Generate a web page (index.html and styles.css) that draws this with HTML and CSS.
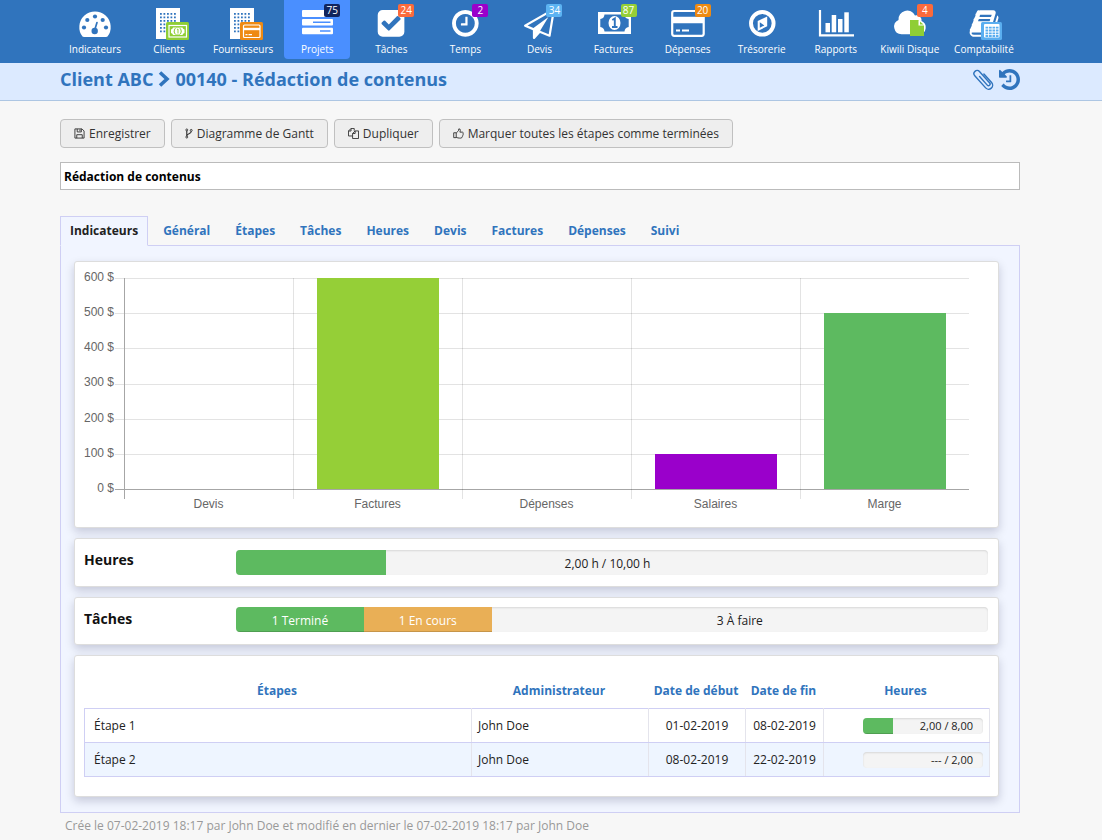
FILE: index.html
```html
<!DOCTYPE html>
<html lang="fr">
<head>
<meta charset="utf-8">
<title>Rédaction de contenus</title>
<link rel="stylesheet" href="styles.css">
</head>
<body>
<svg class="defs" aria-hidden="true">
  <defs>
    <pattern id="windows" x="11" y="8" width="3.5" height="3.5" patternUnits="userSpaceOnUse"><rect width="1.8" height="1.8" fill="#3074bd"/></pattern>
    <g id="building"><rect x="7" y="3" width="24" height="31" fill="#fff"/><rect x="11" y="8" width="16" height="20" fill="url(#windows)"/></g>
  </defs>
</svg>
<nav class="nav">
  <a class="nav-item" href="#"><svg class="nav-icon" viewBox="0 0 40 34"><path fill="#fff" d="M7.5 31.6A15.7 15.7 0 1 1 32.500 31.600Q32 32 31 32H9Q8 32 7.500 31.600Z"/><g fill="#3074bd"><circle cx="9" cy="22.500" r="2.100"/><circle cx="12.300" cy="15" r="2.100"/><circle cx="20" cy="11.500" r="2.100"/><circle cx="27.700" cy="15" r="2.100"/><circle cx="31" cy="22.500" r="2.100"/><circle cx="19.700" cy="26" r="3.200"/></g><path d="M19.700 25L22 17.500" stroke="#3074bd" stroke-width="1.700" stroke-linecap="round"/></svg><span>Indicateurs</span></a>
  <a class="nav-item" href="#"><svg class="nav-icon" viewBox="0 0 40 34"><use href="#building"/><rect x="17" y="17" width="23" height="18" rx="1.500" fill="#8fce35"/><rect x="20" y="20.500" width="17.500" height="11.500" fill="#8fce35" stroke="#fff" stroke-width="1.200"/><path fill="#fff" d="M24 22.500H33.500Q33.700 24 35.500 24.500V28Q33.700 28.500 33.500 30H24Q23.800 28.500 22 28V24.500Q23.800 24 24 22.500Z"/><ellipse cx="28.700" cy="26.200" rx="4" ry="3.800" fill="#8fce35"/><ellipse cx="28.700" cy="26.200" rx="2.900" ry="3.400" fill="#fff"/><path d="M28 24.500L29 24V28.500" fill="none" stroke="#8fce35"/></svg><span>Clients</span></a>
  <a class="nav-item" href="#"><svg class="nav-icon" viewBox="0 0 40 34"><use href="#building"/><rect x="17" y="17" width="23" height="18" rx="1.500" fill="#ee8a12"/><rect x="20.500" y="20" width="16.500" height="12.500" rx="1" fill="none" stroke="#fff" stroke-width="1.200"/><path d="M20.500 24H37" stroke="#fff" stroke-width="2.400"/><path d="M22.500 29.700H24.500M25.500 29.700H29" stroke="#fff" stroke-width="1.200"/></svg><span>Fournisseurs</span></a>
  <a class="nav-item active" href="#"><svg class="nav-icon" viewBox="0 0 40 34"><g fill="#fff"><rect x="5" y="5" width="31" height="7" rx="1"/><rect x="5" y="14" width="31" height="6.500" rx="1"/><rect x="5" y="22.700" width="31" height="6.500" rx="1"/></g><path d="M16 17.300H33.500M23 26H33.500" stroke="#4a8fff" stroke-width="1.600"/></svg><span>Projets</span><b class="badge navy">75</b></a>
  <a class="nav-item" href="#"><svg class="nav-icon" viewBox="0 0 40 34"><path transform="translate(4.500 2.800) scale(.01735)" fill="#fff" d="M813 1299l614-614q19-19 19-45t-19-45l-102-102q-19-19-45-19t-45 19l-467 467-211-211q-19-19-45-19t-45 19l-102 102q-19 19-19 45t19 45l358 358q19 19 45 19t45-19zm851-883v960q0 119-84.500 203.500t-203.500 84.500h-960q-119 0-203.500-84.500t-84.500-203.500v-960q0-119 84.500-203.500t203.500-84.500h960q119 0 203.500 84.500t84.500 203.500z"/></svg><span>Tâches</span><b class="badge red">24</b></a>
  <a class="nav-item" href="#"><svg class="nav-icon" viewBox="0 0 40 34"><path transform="translate(4.800 2.800) scale(.01735)" fill="#fff" d="M1024 544v448q0 14-9 23t-23 9h-320q-14 0-23-9t-9-23v-64q0-14 9-23t23-9h224v-352q0-14 9-23t23-9h64q14 0 23 9t9 23zm416 352q0-148-73-273t-198-198-273-73-273 73-198 198-73 273 73 273 198 198 273 73 273-73 198-198 73-273zm224 0q0 209-103 385.500t-279.500 279.500-385.500 103-385.500-103-279.500-279.500-103-385.500 103-385.500 279.500-279.500 385.500-103 385.500 103 279.500 279.500 103 385.500z"/></svg><span>Temps</span><b class="badge purple">2</b></a>
  <a class="nav-item" href="#"><svg class="nav-icon" viewBox="0 0 40 34"><path transform="translate(5 3) scale(.01735)" fill="#fff" d="M1764 11q33 24 27 64l-256 1536q-5 29-32 45-14 8-31 8-11 0-24-5l-527-215-298 327q-18 21-47 21-14 0-23-4-19-7-30-23.500t-11-36.500v-452l-472-193q-37-14-40-55-3-39 32-59l1664-960q35-21 68 2zm-342 1499l221-1323-1434 827 336 137 863-639-478 797z"/></svg><span>Devis</span><b class="badge sky">34</b></a>
  <a class="nav-item" href="#"><svg class="nav-icon" viewBox="0 0 40 34"><path fill="#fff" fill-rule="evenodd" d="M4 7H37V29H4ZM10.500 9.500Q10.200 13.500 6.300 14V22Q10.200 22.500 10.500 26.500H30.500Q30.800 22.500 34.700 22V14Q30.800 13.500 30.500 9.500Z"/><ellipse cx="20.500" cy="18" rx="6" ry="7" fill="#fff"/><path d="M18.300 15L20.800 13.500V22M18 22H23.500" fill="none" stroke="#3074bd" stroke-width="1.900"/></svg><span>Factures</span><b class="badge lime">87</b></a>
  <a class="nav-item" href="#"><svg class="nav-icon" viewBox="0 0 40 34"><rect x="4.200" y="6" width="31.500" height="24.800" rx="2" fill="none" stroke="#fff" stroke-width="2.200"/><path d="M4 15H36" stroke="#fff" stroke-width="6.500"/><path d="M8 25.500H12M14 25.500H21" stroke="#fff" stroke-width="2"/></svg><span>Dépenses</span><b class="badge orange">20</b></a>
  <a class="nav-item" href="#"><svg class="nav-icon" viewBox="0 0 40 34"><circle cx="20.300" cy="18.300" r="11.300" fill="none" stroke="#fff" stroke-width="3.900"/><path fill="#fff" fill-rule="evenodd" d="M25.200 11.500V21.300L15.700 26V15.900ZM17.800 17.300V22.800L22.300 20.400Z"/></svg><span>Trésorerie</span></a>
  <a class="nav-item" href="#"><svg class="nav-icon" viewBox="0 0 40 34"><path d="M4 5V30.300H38" fill="none" stroke="#fff" stroke-width="2.200"/><g fill="#fff"><rect x="9.500" y="18" width="4.500" height="9.300"/><rect x="15.700" y="10" width="4.500" height="17.300"/><rect x="22" y="14" width="4.500" height="13.300"/><rect x="28.300" y="7.300" width="4.500" height="20"/></g></svg><span>Rapports</span></a>
  <a class="nav-item" href="#"><svg class="nav-icon" viewBox="0 0 40 34"><path fill="#fff" d="M11.500 29.300A7.500 7.500 0 0 1 8.500 15A8.700 8.700 0 0 1 25 10.500A5 5 0 0 1 31.500 16A7 7 0 0 1 30 29.300Z"/><path fill="#8fce35" d="M20 15H29V20H34V31H20Z"/><path fill="#fff" d="M28.500 15L34.500 20.500H28.500Z"/><path fill="#8fce35" d="M30 16.500V19.500H33.500Z"/></svg><span>Kiwili Disque</span><b class="badge red">4</b></a>
  <a class="nav-item" href="#"><svg class="nav-icon" viewBox="0 0 40 34"><path transform="translate(4.500 3) scale(.01735)" fill="#fff" d="M1703 478q40 57 18 129l-275 906q-19 64-76.500 107.500t-122.500 43.500h-923q-77 0-148.500-53.500t-99.500-131.500q-24-67-2-127 0-4 3-27t4-37q1-8-3-21.500t-3-19.500q2-11 8-21t16.500-23.500 16.500-23.500q23-38 45-91.500t30-91.500q3-10 .5-30t-.5-28q3-11 17-28t17-23q21-36 42-92t25-90q1-9-2.500-32t.5-28q4-13 22-30.500t22-22.500q19-26 42.500-84.500t27.500-96.500q1-8-3-25.500t-2-26.500q2-8 9-18t18-23 17-21q8-12 16.500-30.500t15-35 16-36 19.500-32 26.500-23.500 36-11.500 47.500 5.500l-1 3q38-9 51-9h761q74 0 114 56t18 130l-274 906q-36 119-71.500 153.500t-128.500 34.500h-869q-27 0-38 15-11 16-1 43 24 70 144 70h923q29 0 56-15.500t35-41.500l300-987q7-22 5-57 38 15 59 43zm-1064 2q-4 13 2 22.500t20 9.500h608q13 0 25.500-9.500t16.500-22.500l21-64q4-13-2-22.500t-20-9.500h-608q-13 0-25.500 9.500t-16.500 22.500zm-83 256q-4 13 2 22.500t20 9.500h608q13 0 25.500-9.500t16.500-22.500l21-64q4-13-2-22.500t-20-9.500h-608q-13 0-25.500 9.500t-16.500 22.500z"/><rect x="17" y="17" width="21" height="18" rx="1.500" fill="#5aaef0"/><rect x="20" y="19" width="15.500" height="13.500" rx="1" fill="#fff"/><path d="M21.500 22.700H34.500M21.500 25.500H34.500M21.500 28.300H34.500M21.500 31H34.500" stroke="#5aaef0" stroke-width="1.800" stroke-dasharray="2.700 .8"/></svg><span>Comptabilité</span></a>
</nav>

<header class="title-bar">
  <h1 class="page-title"><a href="#">Client ABC</a><svg class="chevron" viewBox="0 0 12 16"><path d="M2 1.500L9 8L2 14.500" fill="none" stroke="currentColor" stroke-width="3.600"/></svg><span>00140 - Rédaction de contenus</span></h1>
  <div class="title-tools">
    <button class="icon-button" aria-label="Pièces jointes"><svg viewBox="-11 -11 22 22"><path transform="rotate(-42)" d="M4.200 -4V8A4.200 4.200 0 0 1 -4.200 8V-9A3.300 3.300 0 0 1 2.400 -9V7A1.700 1.700 0 0 1 -1 7V-5" fill="none" stroke="currentColor" stroke-width="1.500" stroke-linecap="round"/></svg></button>
    <button class="icon-button" aria-label="Historique"><svg viewBox="128 128 1536 1536"><path fill="currentColor" d="M1664 896q0 156-61 298t-164 245-245 164-298 61q-172 0-327-72.500t-264-204.500q-7-10-6.500-22.500t8.500-20.500l137-138q10-9 25-9 16 2 23 12 73 95 179 147t225 52q104 0 198.500-40.500t163.500-109.500 109.500-163.500 40.500-198.500-40.500-198.500-109.500-163.500-163.500-109.500-198.500-40.500q-98 0-188 35.500t-160 101.500l137 138q31 30 14 69-17 40-59 40h-448q-26 0-45-19t-19-45v-448q0-42 40-59 39-17 69 14l130 129q107-101 244.500-156.500t284.500-55.500q156 0 298 61t245 164 164 245 61 298zm-640-288v448q0 14-9 23t-23 9h-320q-14 0-23-9t-9-23v-64q0-14 9-23t23-9h224v-352q0-14 9-23t23-9h64q14 0 23 9t9 23z"/></svg></button>
  </div>
</header>

<main class="content">
  <div class="actions">
    <button class="button"><svg viewBox="0 0 12 12"><path d="M1 1H8.700L11 3.300V11H1ZM3 11V7.300H9V11M3.500 1V4.300H8V1M6.500 1.500V3.500" fill="none" stroke="currentColor"/></svg>Enregistrer</button>
    <button class="button"><svg class="narrow" viewBox="0 0 9 12"><path d="M2 3V9M7 3.500Q7 5.500 4.500 6.200Q2 7 2 9" fill="none" stroke="currentColor" stroke-width="1.300"/><g fill="none" stroke="currentColor"><circle cx="2" cy="2" r="1.100"/><circle cx="7" cy="2.500" r="1.100"/><circle cx="2" cy="10" r="1.100"/></g></svg>Diagramme de Gantt</button>
    <button class="button"><svg viewBox="0 0 12 12"><path d="M4.800 8.700H.500V3.300L3.300.500H6.800V3M3.300.500V3.300H.500M5 6L7.800 3.200H11.500V11.500H5ZM7.800 3.200V6H5" fill="none" stroke="currentColor"/></svg>Dupliquer</button>
    <button class="button"><svg viewBox="0 0 12 12"><path d="M3.500 5.500L6 3L6.300 1Q8.200 .600 8 2.700L7.500 4.500H10.300Q11.600 4.800 11 6.200Q11.300 7.200 10.700 8Q10.800 9 10 9.600Q9.900 11 8.500 11H7Q5.500 11 3.500 10.200M3.500 5.200H.800V10.500H3.500Z" fill="none" stroke="currentColor"/></svg>Marquer toutes les étapes comme terminées</button>
  </div>
  <input class="project-name" type="text" aria-label="Nom du projet" value="Rédaction de contenus">

  <nav class="tabs">
    <a class="tab current" href="#">Indicateurs</a><a class="tab" href="#">Général</a><a class="tab" href="#">Étapes</a><a class="tab" href="#">Tâches</a><a class="tab" href="#">Heures</a><a class="tab" href="#">Devis</a><a class="tab" href="#">Factures</a><a class="tab" href="#">Dépenses</a><a class="tab" href="#">Suivi</a>
  </nav>
  <div class="panel">
    <section class="card chart">
      <div class="y-axis"><span>600 $</span><span>500 $</span><span>400 $</span><span>300 $</span><span>200 $</span><span>100 $</span><span>0 $</span></div>
      <div class="plot">
        <div class="lines"><i></i><i></i><i></i><i></i><i></i><i></i></div>
        <div class="columns">
          <div class="column"><div class="track"></div><span>Devis</span></div>
          <div class="column"><div class="track"><div class="bar lime" style="height:100%"></div></div><span>Factures</span></div>
          <div class="column"><div class="track"></div><span>Dépenses</span></div>
          <div class="column"><div class="track"><div class="bar purple" style="height:16.67%"></div></div><span>Salaires</span></div>
          <div class="column"><div class="track"><div class="bar green" style="height:83.33%"></div></div><span>Marge</span></div>
        </div>
      </div>
    </section>

    <section class="card meter tall">
      <h2>Heures</h2>
      <div class="progress stacked"><div class="segment green" style="width:20%"></div><span>2,00 h / 10,00 h</span></div>
    </section>
    <section class="card meter">
      <h2>Tâches</h2>
      <div class="progress"><div class="segment green" style="width:17%">1 Terminé</div><div class="segment amber" style="width:17%">1 En cours</div><div class="rest">3 À faire</div></div>
    </section>

    <section class="card steps">
      <table>
        <colgroup><col><col class="col-admin"><col class="col-start"><col class="col-end"><col class="col-hours"></colgroup>
        <thead><tr><th>Étapes</th><th>Administrateur</th><th>Date de début</th><th>Date de fin</th><th>Heures</th></tr></thead>
        <tbody>
          <tr><td class="step-name">Étape 1</td><td>John Doe</td><td class="date">01-02-2019</td><td class="date">08-02-2019</td><td><div class="mini"><div class="segment green" style="width:25%"></div><span>2,00 / 8,00</span></div></td></tr>
          <tr><td class="step-name">Étape 2</td><td>John Doe</td><td class="date">08-02-2019</td><td class="date">22-02-2019</td><td><div class="mini"><span>--- / 2,00</span></div></td></tr>
        </tbody>
      </table>
    </section>
  </div>
  <p class="audit">Crée le 07-02-2019 18:17 par John Doe et modifié en dernier le 07-02-2019 18:17 par John Doe</p>
</main>
</body>
</html>
```
FILE: styles.css
```css
* { box-sizing: border-box; }

body {
  margin: 0;
  background: #f7f7f7;
  color: #222;
  font: 12px/16px "Open Sans", sans-serif;
}

a { color: inherit; text-decoration: none; }
.defs { position: absolute; width: 0; height: 0; }

/* Main navigation */
.nav {
  display: flex;
  justify-content: space-between;
  height: 63px;
  padding: 0 85px 0 62px;
  background: #3074bd;
}
.nav-item {
  position: relative;
  display: flex;
  flex-direction: column;
  align-items: center;
  flex: 0 0 66px;
  height: 59px;
  padding-top: 5px;
  border-radius: 0 0 4px 4px;
  color: #fff;
  font-size: 10px;
  line-height: 14px;
  white-space: nowrap;
}
.nav-item.active { background: #4a8fff; }
.nav-icon { width: 40px; height: 34px; margin-bottom: 3px; overflow: visible; }
.badge {
  position: absolute;
  top: 4px;
  left: 40px;
  width: 16px;
  border-radius: 2px;
  font-size: 10px;
  font-weight: 400;
  line-height: 13px;
  text-align: center;
}
.navy { background: #11245c; }
.red { background: #fb6a3b; }
.purple { background: #9a00cb; }
.sky { background: #5cb3f2; }
.lime { background: #95cf37; }
.orange { background: #ee8a12; }
.green { background: #5dba60; }
.amber { background: #e9af56; }

/* Title bar */
.title-bar {
  display: flex;
  justify-content: space-between;
  height: 38px;
  padding: 4px 82px 0 60px;
  background: #dceaff;
  border-bottom: 1px solid #adc6e3;
  color: #3074bd;
}
.page-title {
  display: flex;
  align-items: center;
  height: 24px;
  margin: 0;
  font-size: 18px;
  font-weight: 700;
}
.chevron { width: 12px; height: 16px; margin: 0 5px; }
.title-tools { display: flex; gap: 5px; height: 24px; align-items: center; }
.icon-button { padding: 0; border: 0; background: none; color: #3074bd; }
.icon-button svg { display: block; width: 21px; height: 21px; }

/* Page content */
.content { padding: 18px 82px 0 60px; }
.actions { display: flex; gap: 6px; margin-bottom: 14px; }
.button {
  display: flex;
  align-items: center;
  gap: 4px;
  height: 29px;
  padding: 0 13px;
  border: 1px solid #c0c0c0;
  border-radius: 4px;
  background: #eee;
  color: #333;
  font: inherit;
}
.button svg { width: 11px; height: 11px; }
.button .narrow { width: 8px; }
.project-name {
  display: block;
  width: 100%;
  height: 28px;
  margin-bottom: 26px;
  padding: 0 3px;
  border: 1px solid #bbb;
  background: #fff;
  color: #000;
  font: 700 12px/16px "Open Sans", sans-serif;
}

.tabs { display: flex; gap: 5px; color: #3074bd; font-weight: 700; }
.tab {
  height: 30px;
  margin-bottom: -1px;
  padding: 6px 9px;
  border: 1px solid transparent;
}
.tab.current {
  position: relative;
  border-color: #cfcff4 #cfcff4 #f1f5ff;
  background: #f1f5ff;
  color: #222;
}
.panel {
  display: flex;
  flex-direction: column;
  gap: 10px;
  padding: 15px 20px 15px 13px;
  border: 1px solid #cfcff4;
  background: #f1f5ff;
}
.card {
  border: 1px solid #ddd;
  border-radius: 3px;
  background: #fff;
  box-shadow: 0 4px 10px rgba(0, 0, 50, .18);
}

/* Chart */
.chart {
  display: flex;
  padding: 16px 29px 16px 9px;
  color: #666;
  font: 12px/14px "Liberation Sans", Arial, sans-serif;
}
.y-axis {
  display: flex;
  flex-direction: column;
  justify-content: space-between;
  flex: 0 0 31px;
  height: 225px;
  margin-top: -8px;
  padding-right: 1px;
  text-align: right;
  white-space: nowrap;
}
.plot { display: grid; flex: 1; }
.lines, .columns { grid-area: 1 / 1; }
.lines {
  display: flex;
  flex-direction: column;
  height: 212px;
  border-bottom: 1px solid #a6a6a6;
}
.lines i { flex: 1; border-top: 1px solid #e3e3e3; }
.columns { display: flex; padding-left: 9px; }
.column { flex: 1; text-align: center; }
.column span { display: block; margin-top: -2px; }
.track {
  display: flex;
  align-items: flex-end;
  justify-content: center;
  height: 221px;
  padding-bottom: 10px;
  border-left: 1px solid rgba(0, 0, 0, .11);
}
.column:first-child .track { border-color: #a6a6a6; }
.bar { width: 73%; }

/* Progress cards */
.meter { display: flex; padding: 9px 10px 12px 9px; }
.meter.tall { padding-top: 11px; padding-bottom: 11px; }
.meter h2 {
  flex: 0 0 152px;
  margin: 2px 0 0;
  color: #111;
  font-size: 14px;
  font-weight: 700;
  line-height: 20px;
}
.meter.tall h2 { margin-top: 0; }
.progress, .mini {
  overflow: hidden;
  border-radius: 4px;
  background: #f4f4f4;
  box-shadow: inset 0 1px 2px rgba(0, 0, 0, .12);
}
.progress {
  display: flex;
  flex: 1;
  height: 25px;
  line-height: 27px;
  text-align: center;
}
.progress.stacked, .mini { display: grid; }
.stacked > *, .mini > * { grid-area: 1 / 1; }
.stacked span { padding-right: 9px; }
.segment { color: #fff; box-shadow: inset 0 -1px 0 rgba(0, 0, 0, .15); }
.rest { flex: 1; }

/* Steps table */
.steps { padding: 27px 8px 19px 9px; }
.steps table { width: 100%; table-layout: fixed; border-collapse: collapse; }
.col-admin { width: 177px; }
.col-start { width: 97px; }
.col-end { width: 78px; }
.col-hours { width: 166px; }
.steps th {
  padding: 0 2px 9px 0;
  color: #3074bd;
  font-weight: 700;
  white-space: nowrap;
}
.steps td { height: 34px; padding: 0 6px; border: 1px solid #e4e4ec; }
.steps tbody tr { border: 1px solid #cfcff4; }
.steps td { border-top-color: #cfcff4; border-bottom-color: #cfcff4; }
.steps tbody tr:nth-child(even) { background: #eef5ff; }
.steps .step-name { padding-left: 9px; border-left-color: #cfcff4; }
.steps .date { text-align: center; }
.mini {
  width: 120px;
  height: 16px;
  margin-left: auto;
  font-size: 11px;
  line-height: 16px;
  text-align: right;
}
.mini span { padding-right: 10px; }

.audit { margin: 5px 5px 0; color: #999; }
```
